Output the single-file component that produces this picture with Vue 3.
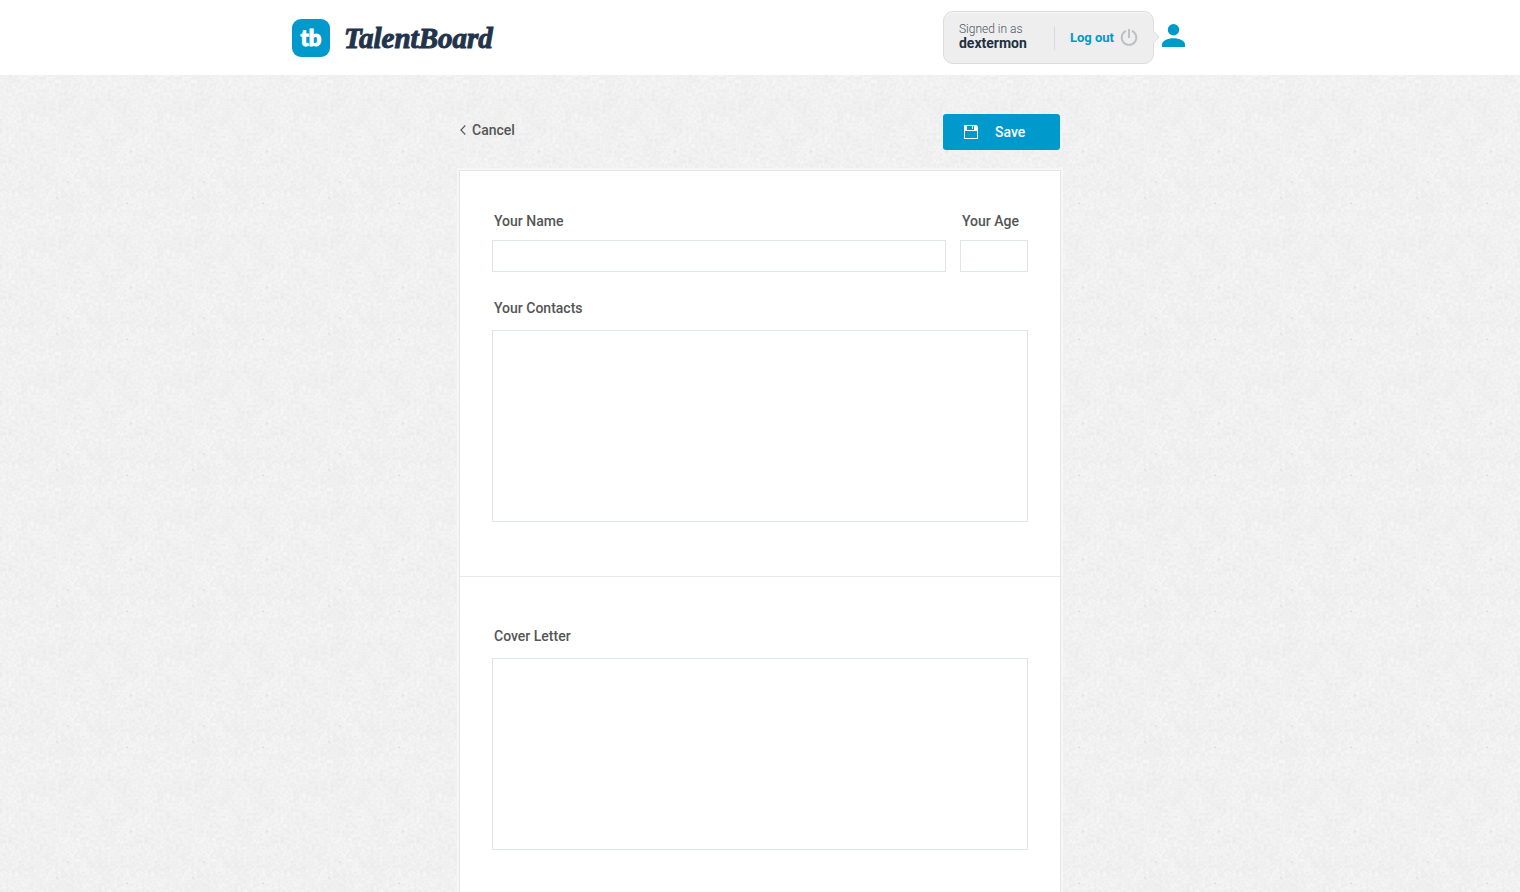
<template>
  <div class="page">
    <header class="topbar">
      <div class="topbar-inner">
        <a href="#" class="brand" aria-label="TalentBoard">
          <span class="brand-mark">tb</span>
          <span class="brand-name">TalentBoard</span>
        </a>

        <div class="account">
          <div class="account-box">
            <div class="signed">
              <span class="signed-label">Signed in as</span>
              <strong class="signed-user">{{ username }}</strong>
            </div>
            <a href="#" class="logout">
              Log out
              <svg width="18" height="18" viewBox="0 0 18 18" aria-hidden="true">
                <path d="M6 1.900A7.300 7.300 0 1 0 12 1.900M9 0v9" fill="none" stroke="#bdbfc2" stroke-width="1.900" />
              </svg>
            </a>
            <svg class="account-arrow" width="7" height="14" viewBox="0 0 7 14" aria-hidden="true">
              <path d="M0 0.500L6 7L0 13.500" fill="#eeeeee" stroke="#dcdcdc" />
            </svg>
          </div>
          <svg class="avatar" width="23" height="23" viewBox="0 0 23 23" aria-hidden="true">
            <circle cx="11.500" cy="5.700" r="5.700" fill="#0099cc" />
            <path d="M0 23V20.500C0 17 5.500 14.300 11.500 14.300s11.500 2.700 11.500 6.200V23z" fill="#0099cc" />
          </svg>
        </div>
      </div>
    </header>

    <main class="content">
      <form @submit.prevent>
        <div class="actions">
          <a href="#" class="cancel">
            <svg width="6" height="10" viewBox="0 0 6 10" aria-hidden="true">
              <path d="M5.300 0.500L0.900 5l4.400 4.500" fill="none" stroke="#555" stroke-width="1.100" />
            </svg>
            Cancel
          </a>
          <button type="submit" class="save">
            <svg width="14" height="14" viewBox="0 0 14 14" aria-hidden="true">
              <path
                fill="#fff"
                fill-rule="evenodd"
                d="M0 0h12.500L14 1.500V14H0zM1 6v7h12V6zM3 1v4h7V1zM8 1h1v3H8z"
              />
            </svg>
            Save
          </button>
        </div>

        <div class="card">
          <section class="section">
            <div class="row">
              <div class="field field-name">
                <label for="name">Your Name</label>
                <input id="name" v-model="form.name" type="text" />
              </div>
              <div class="field field-age">
                <label for="age">Your Age</label>
                <input id="age" v-model="form.age" type="text" />
              </div>
            </div>
            <div class="field field-area">
              <label for="contacts">Your Contacts</label>
              <textarea id="contacts" v-model="form.contacts"></textarea>
            </div>
          </section>

          <section class="section">
            <div class="field field-area">
              <label for="letter">Cover Letter</label>
              <textarea id="letter" v-model="form.letter"></textarea>
            </div>
          </section>
        </div>
      </form>
    </main>
  </div>
</template>

<script setup>
import { reactive } from 'vue'

const username = 'dextermon'

const form = reactive({
  name: '',
  age: '',
  contacts: '',
  letter: '',
})
</script>

<style>
html {
  scrollbar-width: none;
}

body {
  margin: 0;
}
</style>

<style scoped>
.page {
  box-sizing: border-box;
  min-height: 100vh;
  font-family: Roboto, 'Liberation Sans', sans-serif;
  font-size: 14px;
  color: #555;
  /* paper texture, repeated */
  background-color: #f1f1f1;
  background-image: url("data:image/svg+xml,%3Csvg xmlns='http://www.w3.org/2000/svg' width='136' height='136'%3E%3Cfilter id='a' x='0' y='0' width='100%25' height='100%25' color-interpolation-filters='sRGB'%3E%3CfeTurbulence type='fractalNoise' baseFrequency='.32' numOctaves='3' seed='4' stitchTiles='stitch'/%3E%3CfeColorMatrix values='.07 0 0 0 .913 .07 0 0 0 .913 .07 0 0 0 .913 0 0 0 0 1'/%3E%3C/filter%3E%3Cfilter id='b' x='0' y='0' width='100%25' height='100%25' color-interpolation-filters='sRGB'%3E%3CfeTurbulence type='fractalNoise' baseFrequency='.05' numOctaves='3' seed='9' stitchTiles='stitch'/%3E%3CfeColorMatrix values='0 0 0 0 .8 0 0 0 0 .8 0 0 0 0 .8 .2 0 0 0 -.07'/%3E%3C/filter%3E%3Crect width='136' height='136' filter='url(%23a)'/%3E%3Crect width='136' height='136' filter='url(%23b)'/%3E%3Cg fill='%23dcdcdc'%3E%3Cellipse cx='57' cy='62' rx='1.200' ry='.7'/%3E%3Cellipse cx='131' cy='15' rx='1' ry='.8'/%3E%3Cellipse cx='68' cy='46' rx='1.200' ry='.8'/%3E%3Cellipse cx='127' cy='67' rx='.9' ry='1'/%3E%3C/g%3E%3C/svg%3E");
}

.topbar {
  background: #fff;
}

.topbar-inner {
  display: flex;
  justify-content: space-between;
  align-items: center;
  box-sizing: border-box;
  max-width: 936px;
  height: 75px;
  margin: 0 auto;
  padding-right: 43px;
}

.brand {
  display: flex;
  align-items: center;
  gap: 14px;
  color: #22344c;
  text-decoration: none;
}

.brand-mark {
  width: 38px;
  height: 38px;
  border-radius: 9px;
  background: #0099cc;
  color: #fff;
  font-family: Lato, sans-serif;
  font-size: 22px;
  font-weight: 900;
  line-height: 38px;
  text-align: center;
  -webkit-text-stroke: 1px #fff;
}

.brand-name {
  font-family: 'Liberation Serif', serif;
  font-size: 29px;
  font-style: italic;
  font-weight: 700;
  line-height: 38px;
  -webkit-text-stroke: 1px #22344c;
}

.account {
  display: flex;
  align-items: center;
  gap: 8px;
}

.account-box {
  position: relative;
  display: flex;
  align-items: center;
  box-sizing: border-box;
  height: 53px;
  padding: 0 15px;
  border: 1px solid #dcdcdc;
  border-radius: 10px;
  background: #eee;
  box-shadow: inset 0 1px 0 #f8f8f8;
}

.account-arrow {
  position: absolute;
  top: 18px;
  right: -7px;
}

.signed {
  display: flex;
  flex-direction: column;
  width: 95px;
  padding-bottom: 3px;
}

.signed-label {
  font-size: 12px;
  font-weight: 300;
  line-height: 14px;
  color: #505460;
}

.signed-user {
  font-size: 14px;
  line-height: 14px;
  color: #22303f;
}

.logout {
  display: flex;
  align-items: center;
  gap: 6px;
  padding-left: 15px;
  border-left: 1px solid #dadada;
  font-size: 13px;
  font-weight: 700;
  line-height: 24px;
  color: #0099cc;
  text-decoration: none;
}

.avatar {
  margin-top: -4px;
}

.content {
  max-width: 602px;
  margin: 0 auto;
  padding-top: 39px;
}

.actions {
  display: flex;
  justify-content: space-between;
  padding: 0 1px;
  margin-bottom: 20px;
}

.cancel {
  display: flex;
  align-items: center;
  gap: 6px;
  height: 32px;
  font-weight: 500;
  color: #555;
  text-decoration: none;
}

.save {
  display: flex;
  align-items: center;
  gap: 17px;
  width: 117px;
  height: 36px;
  padding: 0 21px;
  border: 0;
  border-radius: 3px;
  background: #0099cc;
  color: #fff;
  font-family: inherit;
  font-size: 14px;
  font-weight: 500;
  cursor: pointer;
}

.card {
  border: 1px solid #e4e6e6;
  background: #fff;
  box-shadow: 0 0 0 2px #f6f6f6;
}

.section {
  padding: 40px 32px 54px;
}

.section + .section {
  padding-top: 49px;
  border-top: 1px solid #e8eaea;
}

.row {
  display: flex;
  gap: 14px;
  margin-bottom: 26px;
}

.field {
  display: flex;
  flex-direction: column;
  gap: 9px;
}

.field-area {
  gap: 12px;
}

.field-name {
  flex: 1;
}

.field-age {
  width: 68px;
}

.field label {
  padding-left: 2px;
  font-weight: 500;
  line-height: 20px;
}

input,
textarea {
  box-sizing: border-box;
  width: 100%;
  margin: 0;
  padding: 6px 10px;
  border: 1px solid #e0e6e8;
  border-radius: 0;
  background: #fff;
  color: #555;
  font-family: inherit;
  font-size: 14px;
}

input {
  height: 32px;
}

textarea {
  height: 192px;
  resize: none;
}
</style>
